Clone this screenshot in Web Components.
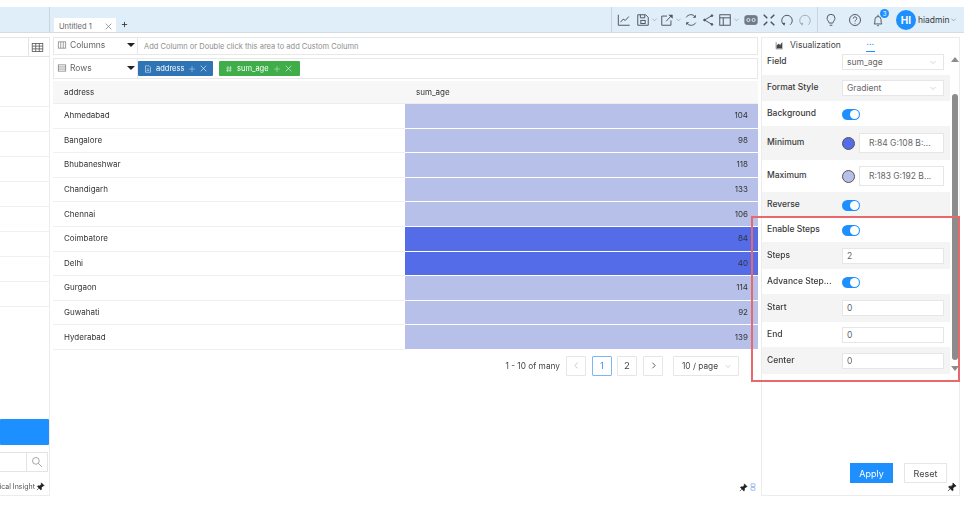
<!DOCTYPE html>
<html>
<head>
<meta charset="utf-8">
<title>Untitled 1</title>
<style>
  html, body { margin: 0; padding: 0; background: #fff; }
  body { font: 9px "Inter", "Liberation Sans", sans-serif; color: #3a3a3a; width: 976px; height: 514px; overflow: hidden; }
</style>
</head>
<body>
<app-shell></app-shell>

<script>
// icon strokes shared by the toolbar, the shelves and the panels
const ICONS = {
  chart: '<path d="M1.500 2v12h13"/><path d="M4 10.500l3-3.500 2.500 1.500L13.500 4"/>',
  save: '<path d="M2 2h9l3 3v9H2z"/><path d="M5 2v3.500h5V2"/><rect x="5.500" y="8.500" width="5" height="3.500"/>',
  edit: '<path d="M8 3.500H2v10.500h10.500V8.500"/><path d="M7 9.500l6-6.500"/><path d="M9.500 2h5v4.500z" fill="currentColor" stroke="none"/>',
  refresh: '<path d="M13 4.500A6.300 6.300 0 0 0 2.500 5"/><path d="M3 11.500A6.300 6.300 0 0 0 13.500 11"/><path d="M13.500 2v3.500H10z" fill="currentColor" stroke="none"/><path d="M2.500 14v-3.500H6z" fill="currentColor" stroke="none"/>',
  share: '<path d="M12.500 3L4 8l8.500 5"/><circle cx="12.500" cy="3" r="1" fill="currentColor"/><circle cx="4" cy="8" r="1" fill="currentColor"/><circle cx="12.500" cy="13" r="1" fill="currentColor"/>',
  layout: '<rect x="2" y="2" width="12" height="12"/><path d="M2 5.500h12M6 5.500V14"/>',
  money: '<rect x="1" y="3" width="14" height="10" rx="2" fill="currentColor" opacity=".75"/><circle cx="5" cy="8" r="1.800" fill="none" stroke="#dfeef8"/><circle cx="11" cy="8" r="1.800" fill="none" stroke="#dfeef8"/>',
  expand: '<path d="M5.500 5.500L2.500 2.500M10.500 5.500l3-3M5.500 10.500l-3 3M10.500 10.500l3 3" stroke-width="1.800" stroke-linecap="round"/>',
  undo: '<path d="M4.500 13.500A6 6 0 1 1 11.500 13.500"/><path d="M2.500 11.500l2.500 3 1-3.500z" fill="currentColor" stroke="none"/>',
  bulb: '<path d="M6 11.500C5.500 9.500 3.500 8.500 3.500 6a4.500 4.500 0 0 1 9 0c0 2.500-2 3.500-2.500 5.500z"/><path d="M6.500 14h3"/>',
  help: '<circle cx="8" cy="8" r="6.300"/><path d="M6 6.300a2 2 0 1 1 3 1.800c-.7.400-1 .8-1 1.600"/><path d="M8 11.300v.8"/>',
  bell: '<path d="M3.500 12.500c1-1 1-2.500 1-5a3.500 3.500 0 0 1 7 0c0 2.500 0 4 1 5z"/><path d="M7 14.500h2"/><path d="M8 2v1.500"/>',
  chev: '<path d="M3 6l5 5 5-5"/>',
  close: '<path d="M3 3l10 10M13 3L3 13"/>',
  plus: '<path d="M8 2v12M2 8h12"/>',
  search: '<circle cx="6.500" cy="6.500" r="4.500"/><path d="M10 10l4.500 4.500"/>',
  grid: '<rect x="1.500" y="3" width="13" height="10"/><path d="M1.500 6.300h13M1.500 9.700h13M5.800 3v10M10.200 3v10"/>',
  cols: '<rect x="2" y="3" width="12" height="10"/><path d="M6 3v10M10 3v10"/>',
  rows: '<rect x="2" y="3" width="12" height="10"/><path d="M2 6.300h12M2 9.700h12"/>',
  file: '<path d="M3 1.500h7l3 3v10H3z"/><path d="M5.500 8h5M5.500 11h5"/>',
  vis: '<path d="M2 2v12h12" /><path d="M3.500 12.500V8l3-3 2.500 3 3.500-5v9.500z" fill="currentColor"/>',
  pin: '<path d="M9.500 1.500l5 5-2 .5-3 3 .3 3-1.300 1-6-6 1-1.300 3 .3 3-3z" fill="currentColor"/><path d="M5 11l-3.500 3.500"/>',
  link: '<rect x="4" y="1.500" width="8" height="5.500" rx="1"/><rect x="4" y="9" width="8" height="5.500" rx="1"/>',
  hash: '<path d="M6 2L5 14M11 2l-1 12M2.500 6h11M2 10.500h11"/>'
};
function svg(name, size, width) {
  return `<svg viewBox="0 0 16 16" width="${size}" height="${size}" fill="none" stroke="currentColor" stroke-width="${width || 1.1}" style="display:block;flex:none">${ICONS[name]}</svg>`;
}

class ToolIcon extends HTMLElement {
  connectedCallback() {
    const w = this.getAttribute('w') || 18;
    const name = this.getAttribute('name');
    const drop = this.hasAttribute('drop');
    this.attachShadow({ mode: 'open' }).innerHTML = `
      <style>
        :host { display: flex; align-items: center; justify-content: center; width: ${w}px; height: 24px; color: ${this.getAttribute('color') || '#4c5560'}; position: relative; }
        .c { color: #77808a; margin-left: 1px; }
      </style>
      ${svg(name, this.getAttribute('size') || 14)}
      ${drop ? `<span class="c">${svg('chev', 7)}</span>` : ''}
      <slot></slot>`;
  }
}
customElements.define('tool-icon', ToolIcon);

class TopBar extends HTMLElement {
  constructor() {
    super();
    this.attachShadow({ mode: 'open' }).innerHTML = `
      <style>
        :host { display: flex; height: 26px; width: 964px; background: #dfeef8; border-bottom: 1px solid #d5dde3; box-sizing: border-box; }
        .left { width: 50px; border-right: 1px solid #c9d4dc; flex: none; box-sizing: border-box; }
        .tabs { flex: none; width: 561px; display: flex; align-items: flex-end; padding-left: 4px; box-sizing: border-box; }
        .tab { width: 62px; height: 14px; background: #fff; display: flex; align-items: center; justify-content: space-between; padding: 2px 3px 0 5px; box-sizing: border-box; font-size: 7.500px; color: #666; }
        .add { margin: 0 0 4px 5px; color: #333; }
        .tools { display: flex; align-items: center; border-left: 1px solid #c9d4dc; padding: 0 2px 0 3px; height: 25px; }
        .right { display: flex; align-items: center; border-left: 1px solid #c9d4dc; height: 25px; margin-left: 1px; padding-left: 1px; }
        .badge { position: absolute; left: 13px; top: 1px; width: 9px; height: 9px; border-radius: 50%; background: #1e8fff; color: #fff; font-size: 6px; line-height: 9px; text-align: center; }
        .avatar { width: 20px; height: 20px; border-radius: 50%; background: #1e8fff; color: #fff; font-weight: 700; font-size: 10px; line-height: 20px; text-align: center; margin-left: 7px; }
        .user { margin-left: 2px; font-size: 8.500px; color: #3a3a3a; }
        .uc { color: #666; }
      </style>
      <div class="left"></div>
      <div class="tabs">
        <div class="tab"><span>Untitled 1</span>${svg('close', 9)}</div>
        <span class="add">${svg('plus', 7, 2)}</span>
      </div>
      <div class="tools">
        <tool-icon name="chart" w="18"></tool-icon>
        <tool-icon name="save" w="27" drop></tool-icon>
        <tool-icon name="edit" w="22" drop></tool-icon>
        <tool-icon name="refresh" w="18"></tool-icon>
        <tool-icon name="share" w="16"></tool-icon>
        <tool-icon name="layout" w="26" drop></tool-icon>
        <tool-icon name="money" w="18"></tool-icon>
        <tool-icon name="expand" w="18"></tool-icon>
        <tool-icon name="undo" w="18"></tool-icon>
        <tool-icon name="undo" w="18" color="#a4adb5"></tool-icon>
      </div>
      <div class="right">
        <tool-icon name="bulb" w="24"></tool-icon>
        <tool-icon name="help" w="24"></tool-icon>
        <tool-icon name="bell" w="22"><span class="badge">3</span></tool-icon>
        <div class="avatar">HI</div>
        <span class="user">hiadmin</span>
        <span class="uc">${svg('chev', 7)}</span>
      </div>`;
  }
}
customElements.define('top-bar', TopBar);

class SidePanel extends HTMLElement {
  constructor() {
    const lines = Array.from({ length: 9 }, () => '<div class="line"></div>').join('');
    super();
    this.attachShadow({ mode: 'open' }).innerHTML = `
      <style>
        :host { display: flex; flex-direction: column; width: 50px; height: 459px; background: #fff; border-right: 1px solid #ececec; border-bottom: 1px solid #ececec; box-sizing: border-box; }
        .box { width: 18px; height: 20px; margin-left: 28px; border: 1px solid #e4e4e4; box-sizing: border-box; display: flex; align-items: center; justify-content: center; color: #555; }
        .top { display: flex; border-top: 1px solid #e4e4e4; border-bottom: 1px solid #e4e4e4; height: 20px; box-sizing: border-box; }
        .top .box { margin-left: 28px; border-width: 0 0 0 1px; height: 18px; }
        .line { height: 25px; border-bottom: 1px solid #f0f0f0; box-sizing: border-box; }
        .button { margin-top: auto; height: 26px; background: #1e8fff; border-radius: 1px; }
        .search { display: flex; height: 20px; margin: 7px 1px 0 0; border: 1px solid #e4e4e4; border-left: 0; box-sizing: border-box; }
        .search .ico { margin-left: auto; width: 20px; border-left: 1px solid #e4e4e4; color: #8a8a8a; display: flex; align-items: center; justify-content: center; }
        .foot { height: 23px; display: flex; align-items: center; justify-content: flex-end; gap: 1px; white-space: nowrap; font-size: 7px; color: #555; padding: 5px 4px 0 0; box-sizing: border-box; }
        .foot span { color: #222; }
      </style>
      <div class="top"><div class="box">${svg('grid', 13, 1)}</div></div>
      <div style="height:25px;flex:none"></div>
      <div>${lines}</div>
      <div class="button"></div>
      <div class="search"><div class="ico">${svg('search', 12, 1)}</div></div>
      <div class="foot"><div>ical Insight</div><span>${svg('pin', 9)}</span></div>`;
  }
}
customElements.define('side-panel', SidePanel);

class ShelfRow extends HTMLElement {
  constructor() {
    super();
    this.attachShadow({ mode: 'open' }).innerHTML = `
      <style>
        :host { display: flex; height: 18px; border: 1px solid #e8e8e8; box-sizing: border-box; align-items: stretch; background: #fff; }
        .label { width: 84px; flex: none; display: flex; align-items: center; gap: 3px; padding: 0 0 2px 3px; box-sizing: border-box; font-size: 8.500px; color: #666; border-right: 1px solid #e8e8e8; position: relative; }
        .arrow { position: absolute; right: 2px; top: 50%; margin-top: -3px; border: 4px solid transparent; border-top: 4px solid #222; border-bottom: 0; }
        .body { flex: 1; display: flex; align-items: center; gap: 6px; font-size: 7.500px; color: #8e8e8e; }
        ::slotted(p) { margin: 0 0 0 6px; }
      </style>
      <div class="label"><span id="ic"></span><span id="tx"></span><i class="arrow"></i></div>
      <div class="body"><slot></slot></div>`;
  }
  connectedCallback() {
    this.shadowRoot.getElementById('ic').innerHTML = svg(this.getAttribute('icon'), 10, 1);
    this.shadowRoot.getElementById('tx').textContent = this.getAttribute('label');
  }
}
customElements.define('shelf-row', ShelfRow);

class FieldPill extends HTMLElement {
  connectedCallback() {
    this.attachShadow({ mode: 'open' }).innerHTML = `
      <style>
        :host { display: flex; align-items: center; height: 15px; width: ${this.getAttribute('w')}px; background: ${this.getAttribute('color')}; color: #fff; font-size: 7.500px; padding: 0 0 0 6px; box-sizing: border-box; border-radius: 1px; }
        .t { margin-left: 4px; }
        .a { margin-left: 4px; opacity: .75; }
        .b { margin-left: 3px; }
      </style>
      ${svg(this.getAttribute('icon'), 8, 1)}
      <span class="t"><slot></slot></span>
      <span class="a">${svg('plus', 8, 1)}</span>
      <span class="b">${svg('close', 9, 1)}</span>`;
  }
}
customElements.define('field-pill', FieldPill);

const RECORDS = [
  ['Ahmedabad', 104], ['Bangalore', 98], ['Bhubaneshwar', 118], ['Chandigarh', 133], ['Chennai', 106],
  ['Coimbatore', 84, 1], ['Delhi', 40, 1], ['Gurgaon', 114], ['Guwahati', 92], ['Hyderabad', 139]
];

class DataGrid extends HTMLElement {
  constructor() {
    super();
    const rows = RECORDS.map(r => `
      <div class="td">${r[0]}</div>
      <div class="td num ${r[2] ? 'dark' : 'light'}">${r[1]}</div>`).join('');
    this.attachShadow({ mode: 'open' }).innerHTML = `
      <style>
        :host { display: grid; grid-template-columns: 352px 353px; grid-template-rows: 23px repeat(10, 24.600px); margin-top: 2px; font-size: 8px; }
        .th { background: #f7f7f7; border-bottom: 1px solid #ededed; padding-left: 11px; display: flex; align-items: center; color: #333; box-sizing: border-box; }
        .td { padding: 0 0 1px 11px; display: flex; align-items: center; border-bottom: 1px solid #f0f0f0; box-sizing: border-box; color: #333; }
        .num { justify-content: flex-end; padding: 0 10px 1px 0; border-bottom: 1px solid #fff; }
        .light { background: #b7c0e8; }
        .dark { background: #546ce8; }
      </style>
      <div class="th">address</div><div class="th">sum_age</div>
      ${rows}`;
  }
}
customElements.define('data-grid', DataGrid);

class PagerBar extends HTMLElement {
  constructor() {
    super();
    this.attachShadow({ mode: 'open' }).innerHTML = `
      <style>
        :host { display: flex; align-items: center; height: 20px; margin-top: 6px; padding-right: 19px; justify-content: flex-end; font-size: 8.300px; color: #444; }
        .b { width: 20px; height: 20px; margin-left: 6px; border: 1px solid #e6e6e6; box-sizing: border-box; display: flex; align-items: center; justify-content: center; border-radius: 1px; font-size: 9.500px; }
        .two { margin-left: 5px; }
        .on { border-color: #7ab8f5; color: #4a90e2; }
        .off { color: #bdbdbd; }
        .sel { width: 66px; height: 20px; margin-left: 10px; border: 1px solid #e6e6e6; box-sizing: border-box; display: flex; align-items: center; justify-content: space-between; padding: 0 6px 0 8px; border-radius: 1px; }
        .sel span { color: #aaa; }
      </style>
      <div>1 - 10 of many</div>
      <div class="b off"><svg viewBox="0 0 16 16" width="9" height="9" fill="none" stroke="currentColor" stroke-width="1.500"><path d="M10 3L5 8l5 5"/></svg></div>
      <div class="b on">1</div>
      <div class="b two">2</div>
      <div class="b"><svg viewBox="0 0 16 16" width="9" height="9" fill="none" stroke="currentColor" stroke-width="1.500"><path d="M6 3l5 5-5 5"/></svg></div>
      <div class="sel">10 / page<span>${svg('chev', 8, 1)}</span></div>`;
  }
}
customElements.define('pager-bar', PagerBar);

class MainArea extends HTMLElement {
  constructor() {
    super();
    this.attachShadow({ mode: 'open' }).innerHTML = `
      <style>
        :host { display: flex; flex-direction: column; width: 705px; height: 459px; }
        shelf-row + shelf-row { height: 21px; margin-top: 3px; }
        .foot { margin-top: auto; height: 18px; display: flex; justify-content: flex-end; align-items: center; gap: 1px; padding-right: 1px; color: #222; }
        .foot .l { color: #4a90e2; }
      </style>
      <shelf-row icon="cols" label="Columns"><p>Add Column or Double click this area to add Custom Column</p></shelf-row>
      <shelf-row icon="rows" label="Rows">
        <field-pill icon="file" color="#2f75b5" w="75">address</field-pill>
        <field-pill icon="hash" color="#3fae49" w="81">sum_age</field-pill>
      </shelf-row>
      <data-grid></data-grid>
      <pager-bar></pager-bar>
      <div class="foot"><span>${svg('pin', 9)}</span><span class="l">${svg('link', 8)}</span></div>`;
  }
}
customElements.define('main-area', MainArea);

class SwitchToggle extends HTMLElement {
  constructor() {
    super();
    this.attachShadow({ mode: 'open' }).innerHTML = `
      <style>
        :host { display: block; width: 18px; height: 11px; margin-top: 2px; background: #1e8fff; border-radius: 6px; position: relative; }
        i { position: absolute; right: 1px; top: 1px; width: 9px; height: 9px; border-radius: 50%; background: #fff; }
      </style><i></i>`;
  }
}
customElements.define('switch-toggle', SwitchToggle);

class FormatRow extends HTMLElement {
  connectedCallback() {
    const h = this.getAttribute('h');
    this.attachShadow({ mode: 'open' }).innerHTML = `
      <style>
        :host { display: flex; align-items: center; height: ${h}px; padding: 0 0 ${this.getAttribute('pb') || 0}px 5px; box-sizing: border-box; background: ${this.hasAttribute('alt') ? '#f4f4f4' : '#fff'}; }
        .k { width: 75px; flex: none; padding-bottom: 2px; font-weight: 500; font-size: 8.500px; color: #3a3a3a; white-space: nowrap; overflow: hidden; text-overflow: ellipsis; }
        .v { flex: 1; display: flex; align-items: center; padding-right: 6px; }
      </style>
      <div class="k">${this.getAttribute('label')}</div>
      <div class="v"><slot></slot></div>`;
  }
}
customElements.define('format-row', FormatRow);

class TextBox extends HTMLElement {
  connectedCallback() {
    const chev = this.hasAttribute('select');
    this.attachShadow({ mode: 'open' }).innerHTML = `
      <style>
        :host { display: flex; align-items: center; justify-content: space-between; flex: 1; height: 16px; background: #fff; border: 1px solid #e6e6e6; box-sizing: border-box; padding: 0 6px 0 4px; font-size: 8.500px; color: #666; }
        :host([indent]) { padding-left: 9px; height: 20px; }
        span { color: #aaa; }
      </style>
      <slot></slot>${chev ? `<span>${svg('chev', 8, 1)}</span>` : ''}`;
  }
}
customElements.define('text-box', TextBox);

class ColorDot extends HTMLElement {
  connectedCallback() {
    this.attachShadow({ mode: 'open' }).innerHTML = `
      <style>
        :host { display: block; flex: none; width: 13px; height: 13px; border-radius: 50%; background: ${this.getAttribute('color')}; border: 1px solid #555; box-sizing: border-box; margin-right: 4px; }
      </style>`;
  }
}
customElements.define('color-dot', ColorDot);

class FormatPanel extends HTMLElement {
  constructor() {
    super();
    this.attachShadow({ mode: 'open' }).innerHTML = `
      <style>
        :host { display: flex; flex-direction: column; width: 199px; height: 459px; border: 1px solid #ececec; box-sizing: border-box; position: relative; background: #fff; }
        .tabs { height: 14px; display: flex; align-items: center; font-size: 8.500px; color: #555; flex: none; }
        .vis { display: flex; gap: 6px; align-items: center; margin-left: 13px; color: #444; }
        .more { margin-left: 25px; width: 9px; height: 14px; color: #1e8fff; border-bottom: 1px solid #1e8fff; font-size: 8px; font-weight: 700; line-height: 9px; text-align: center; box-sizing: border-box; }
        .scroll { display: flex; flex: none; }
        .list { width: 188px; flex: none; }
        .bar { width: 9px; margin-left: 1px; position: relative; height: 322px; }
        .up, .down { position: absolute; left: 0; border: 4px solid transparent; }
        .up { top: 5px; border-bottom: 5px solid #8c8c8c; border-top: 0; }
        .down { top: 314px; border-top: 5px solid #8c8c8c; border-bottom: 0; }
        .thumb { position: absolute; left: 1px; top: 42px; width: 6px; height: 266px; background: #8c8c8c; border-radius: 3px; }
        .btns { margin-top: auto; display: flex; gap: 11px; padding: 0 12px 12px 88px; font-size: 9px; }
        .apply, .reset { width: 43px; height: 20px; display: flex; align-items: center; justify-content: center; box-sizing: border-box; }
        .apply { background: #1e8fff; color: #fff; }
        .reset { background: #fff; border: 1px solid #e6e6e6; color: #444; }
        .pin { position: absolute; right: 2px; bottom: 3px; color: #222; }
      </style>
      <div class="tabs"><div class="vis">${svg('vis', 9, 1)}<span>Visualization</span></div><div class="more">...</div></div>
      <div class="scroll">
        <div class="list"><slot></slot></div>
        <div class="bar"><i class="up"></i><i class="thumb"></i><i class="down"></i></div>
      </div>
      <div class="btns"><div class="apply">Apply</div><div class="reset">Reset</div></div>
      <div class="pin">${svg('pin', 10)}</div>`;
  }
}
customElements.define('format-panel', FormatPanel);

class AppShell extends HTMLElement {
  constructor() {
    super();
    this.attachShadow({ mode: 'open' }).innerHTML = `
      <style>
        :host { display: block; position: relative; width: 976px; height: 514px; padding-top: 7px; box-sizing: border-box; filter: blur(.3px); }
        .content { display: flex; gap: 3px; margin-top: 4px; }
        .mark { position: absolute; left: 751px; top: 216px; width: 209px; height: 166px; border: 2px solid #e8696b; box-sizing: border-box; pointer-events: none; }
      </style>
      <top-bar></top-bar>
      <div class="content">
        <side-panel></side-panel>
        <main-area></main-area>
        <format-panel>
          <format-row h="23" pb="4" label="Field"><text-box select>sum_age</text-box></format-row>
          <format-row h="26" alt label="Format Style"><text-box select>Gradient</text-box></format-row>
          <format-row h="25" label="Background"><switch-toggle></switch-toggle></format-row>
          <format-row h="34" alt label="Minimum"><color-dot color="#546ce8"></color-dot><text-box indent>R:84 G:108 B:...</text-box></format-row>
          <format-row h="32" label="Maximum"><color-dot color="#b7c0e8"></color-dot><text-box indent>R:183 G:192 B...</text-box></format-row>
          <format-row h="25" alt label="Reverse"><switch-toggle></switch-toggle></format-row>
          <format-row h="25" label="Enable Steps"><switch-toggle></switch-toggle></format-row>
          <format-row h="27" alt label="Steps"><text-box>2</text-box></format-row>
          <format-row h="25" label="Advance Step..."><switch-toggle></switch-toggle></format-row>
          <format-row h="28" alt label="Start"><text-box>0</text-box></format-row>
          <format-row h="25" label="End"><text-box>0</text-box></format-row>
          <format-row h="27" alt label="Center"><text-box>0</text-box></format-row>
        </format-panel>
      </div>
      <div class="mark"></div>`;
  }
}
customElements.define('app-shell', AppShell);
</script>
</body>
</html>
